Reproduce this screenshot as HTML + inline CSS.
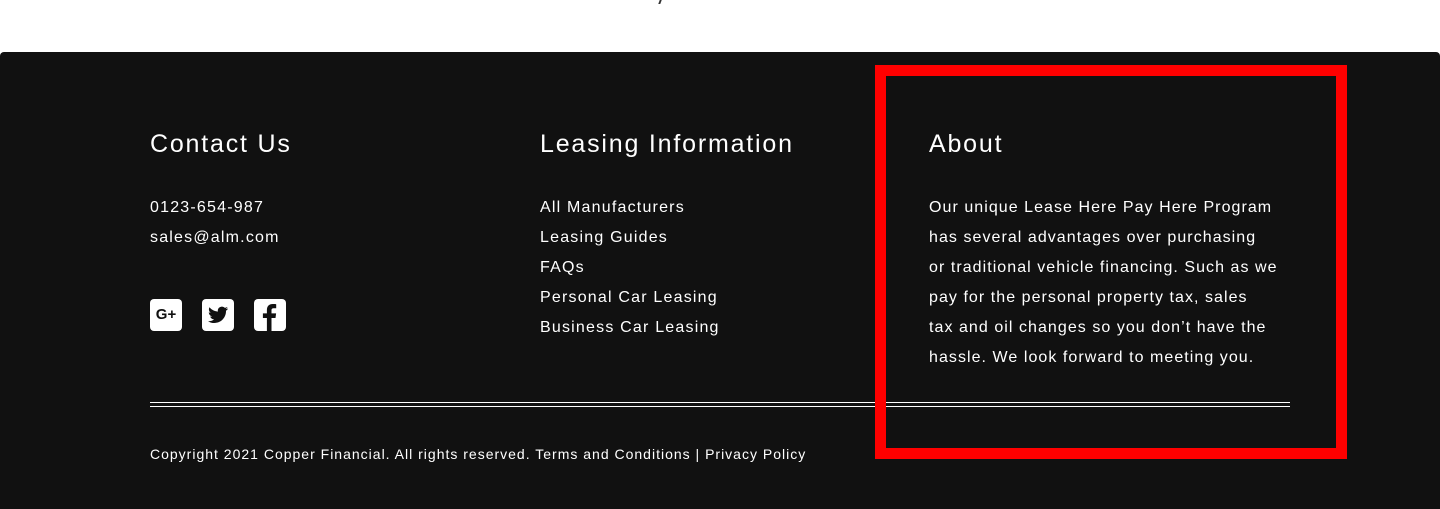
<!DOCTYPE html>
<html><head><meta charset="utf-8"><style>
*{margin:0;padding:0;box-sizing:border-box}
body{width:1440px;height:509px;background:#fff;font-family:"Liberation Sans",sans-serif;position:relative;overflow:hidden}
.f{position:absolute;left:0;top:52px;width:1440px;height:457px;background:#111;border-radius:4px 4px 0 0;color:#fff}
h3{position:absolute;top:78px;font-size:25px;font-weight:normal;letter-spacing:1.8px}
.t{position:absolute;top:141px;font-size:16px;line-height:30px;letter-spacing:1.2px;white-space:nowrap}
.ic{position:absolute;top:247px;width:32px;height:32px;background:#fff;border-radius:4px}
.line{position:absolute;left:150px;width:1140px;height:1px;background:#fff}
.red{position:absolute;left:875px;top:65px;width:472px;height:394px;border:11px solid #f00}
.c{position:absolute;left:150px;top:394px;font-size:14px;letter-spacing:1px;white-space:nowrap}
</style></head><body>
<div style="position:absolute;left:659px;top:0;width:2px;height:4px;background:#333;transform:skew(-20deg)"></div>
<div class="f">
<h3 style="left:150px">Contact Us</h3>
<h3 style="left:540px">Leasing Information</h3>
<h3 style="left:929px">About</h3>
<div class="t" style="left:150px">0123-654-987<br>sales@alm.com</div>
<div class="t" style="left:540px">All Manufacturers<br>Leasing Guides<br>FAQs<br>Personal Car Leasing<br>Business Car Leasing</div>
<div class="t" style="left:929px;letter-spacing:1.05px">Our unique Lease Here Pay Here Program<br>has several advantages over purchasing<br>or traditional vehicle financing. Such as we<br>pay for the personal property tax, sales<br>tax and oil changes so you don’t have the<br>hassle. We look forward to meeting you.</div>
<div class="ic" style="left:150px;color:#111;font-weight:bold;font-size:15px;text-align:center;line-height:32px">G+</div>
<div class="ic" style="left:202px"><svg width="32" height="32" viewBox="0 0 32 32"><path fill="#111" d="M26 9.5c-.7.3-1.5.5-2.3.6.8-.5 1.5-1.3 1.8-2.2-.8.5-1.7.8-2.6 1-.8-.8-1.8-1.3-3-1.3-2.3 0-4.1 1.8-4.1 4.1 0 .3 0 .6.1.9-3.4-.2-6.4-1.8-8.4-4.3-.4.6-.6 1.3-.6 2.1 0 1.4.7 2.7 1.8 3.4-.7 0-1.3-.2-1.9-.5 0 2 1.4 3.7 3.3 4.1-.6.2-1.3.2-1.9.1.5 1.6 2 2.8 3.9 2.9-1.4 1.1-3.2 1.8-5.1 1.8H6c1.8 1.2 4 1.8 6.3 1.8 7.5 0 11.7-6.2 11.7-11.7v-.5c.8-.6 1.5-1.3 2-2.1z"/></svg></div>
<div class="ic" style="left:254px"><svg width="32" height="32" viewBox="0 0 32 32"><path fill="#111" d="M17.5 32V19h4l.6-4.6h-4.6v-2.9c0-1.3.4-2.2 2.3-2.2h2.4V5.2c-.4-.1-1.8-.2-3.5-.2-3.5 0-5.8 2.1-5.8 6v3.4h-4V19h4v13z"/></svg></div>
<div class="line" style="top:350px"></div>
<div class="line" style="top:354px"></div>
<div class="c">Copyright 2021 Copper Financial. All rights reserved. Terms and Conditions | Privacy Policy</div>
</div>
<div class="red"></div>
</body></html>
